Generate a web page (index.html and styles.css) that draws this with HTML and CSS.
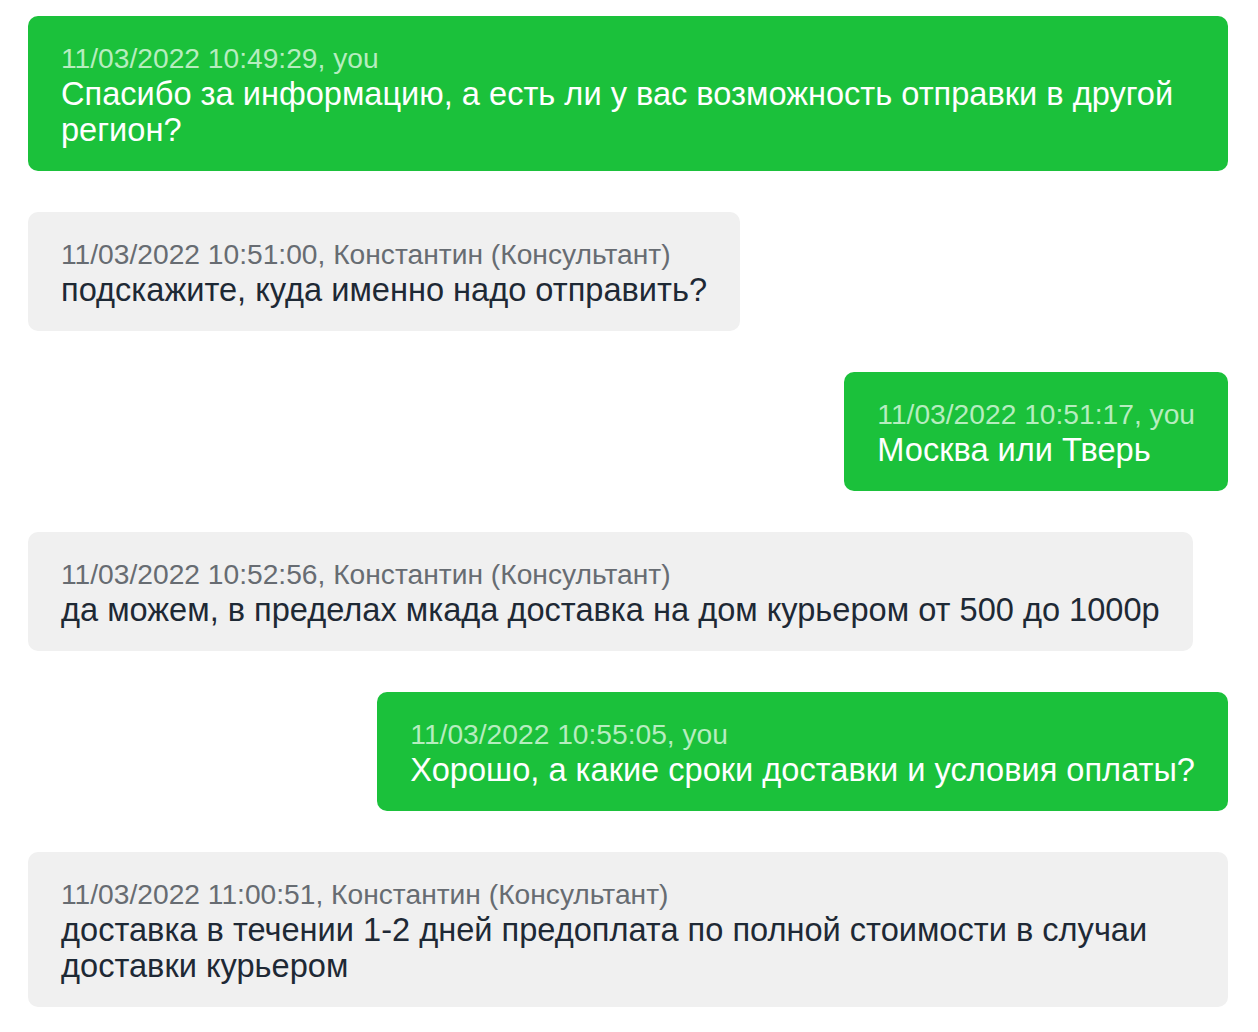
FILE: index.html
```html
<!DOCTYPE html>
<html lang="ru">
<head>
<meta charset="utf-8">
<link rel="stylesheet" href="styles.css">
</head>
<body>
<div class="chat">
  <div class="msg out"><div class="meta">11/03/2022 10:49:29, you</div><div class="text">Спасибо за информацию, а есть ли у вас возможность отправки в другой регион?</div></div>
  <div class="msg in"><div class="meta">11/03/2022 10:51:00, Константин (Консультант)</div><div class="text">подскажите, куда именно надо отправить?</div></div>
  <div class="msg out"><div class="meta">11/03/2022 10:51:17, you</div><div class="text">Москва или Тверь</div></div>
  <div class="msg in"><div class="meta">11/03/2022 10:52:56, Константин (Консультант)</div><div class="text">да можем, в пределах мкада доставка на дом курьером от 500 до 1000р</div></div>
  <div class="msg out"><div class="meta">11/03/2022 10:55:05, you</div><div class="text">Хорошо, а какие сроки доставки и условия оплаты?</div></div>
  <div class="msg in"><div class="meta">11/03/2022 11:00:51, Константин (Консультант)</div><div class="text">доставка в течении 1-2 дней предоплата по полной стоимости в случаи доставки курьером</div></div>
</div>
</body>
</html>
```
FILE: styles.css
```css
html, body { margin: 0; padding: 0; background: #fff; }
body { font-family: "Liberation Sans", Arial, sans-serif; }
.chat {
  display: flex;
  flex-direction: column;
  gap: 41px;
  padding: 16px 30px 0 28px;
}
.msg {
  max-width: 1200px;
  box-sizing: border-box;
  padding: 24px 33px 23px;
  border-radius: 10px;
  line-height: 36px;
}
.msg.out { align-self: flex-end; background: #1bc13b; color: #fff; }
.msg.in { align-self: flex-start; background: #f0f0f0; color: #1e2935; }
.meta { font-size: 28.2px; }
.out .meta { color: #b6edbf; }
.in .meta { color: #676c72; }
.text { font-size: 32.6px; }
```
